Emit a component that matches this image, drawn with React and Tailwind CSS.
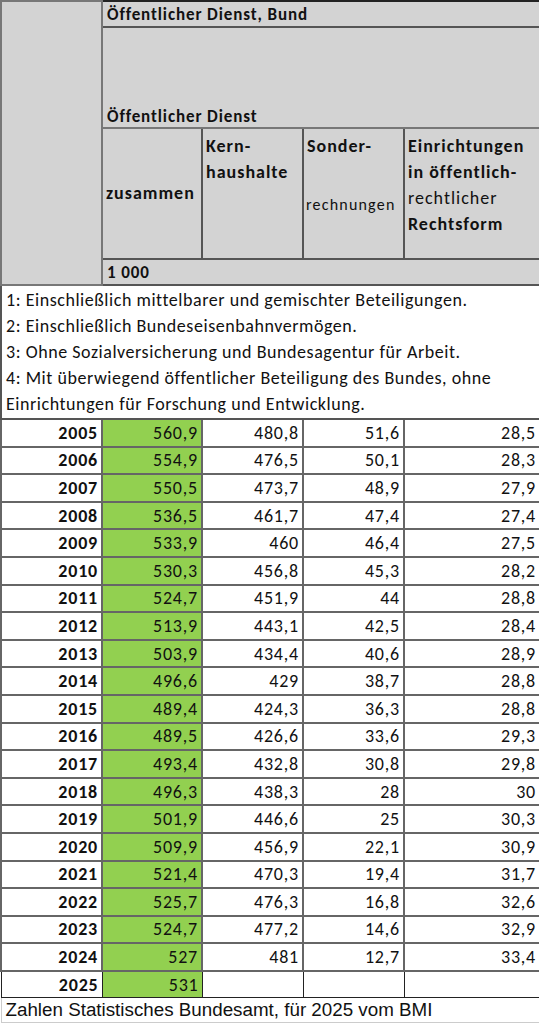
const rows = [
  ['2005', '560,9', '480,8', '51,6', '28,5'],
  ['2006', '554,9', '476,5', '50,1', '28,3'],
  ['2007', '550,5', '473,7', '48,9', '27,9'],
  ['2008', '536,5', '461,7', '47,4', '27,4'],
  ['2009', '533,9', '460', '46,4', '27,5'],
  ['2010', '530,3', '456,8', '45,3', '28,2'],
  ['2011', '524,7', '451,9', '44', '28,8'],
  ['2012', '513,9', '443,1', '42,5', '28,4'],
  ['2013', '503,9', '434,4', '40,6', '28,9'],
  ['2014', '496,6', '429', '38,7', '28,8'],
  ['2015', '489,4', '424,3', '36,3', '28,8'],
  ['2016', '489,5', '426,6', '33,6', '29,3'],
  ['2017', '493,4', '432,8', '30,8', '29,8'],
  ['2018', '496,3', '438,3', '28', '30'],
  ['2019', '501,9', '446,6', '25', '30,3'],
  ['2020', '509,9', '456,9', '22,1', '30,9'],
  ['2021', '521,4', '470,3', '19,4', '31,7'],
  ['2022', '525,7', '476,3', '16,8', '32,6'],
  ['2023', '524,7', '477,2', '14,6', '32,9'],
  ['2024', '527', '481', '12,7', '33,4'],
];

const notes = [
  '1: Einschließlich mittelbarer und gemischter Beteiligungen.',
  '2: Einschließlich Bundeseisenbahnvermögen.',
  '3: Ohne Sozialversicherung und Bundesagentur für Arbeit.',
  '4: Mit überwiegend öffentlicher Beteiligung des Bundes, ohne Einrichtungen für Forschung und Entwicklung.',
];

export default function App() {
  const cell = 'border-2 border-[#666] px-[3px] text-right align-middle';
  return (
    <div className="w-[539px] h-[1024px] bg-white overflow-hidden text-[#111]" style={{ fontFamily: '"Carlito", "Lato", "Open Sans", sans-serif' }}>
      <table className="w-[539px] table-fixed border-collapse">
        <colgroup>
          <col className="w-[101px]" />
          <col className="w-[100px]" />
          <col className="w-[101px]" />
          <col className="w-[101px]" />
          <col className="w-[136px]" />
        </colgroup>
        <tbody>
          {/* header block */}
          <tr className="h-[26px]">
            <td rowSpan={4} className="bg-[#d3d3d3] border-2 border-[#777]" />
            <td colSpan={4} className="bg-[#d3d3d3] border-2 border-[#555] border-t-[#222] px-[4px] text-[17px] tracking-[0.9px] font-bold leading-none">
              Öffentlicher Dienst, Bund
            </td>
          </tr>
          <tr className="h-[101px]">
            <td colSpan={4} className="bg-[#d3d3d3] border-2 border-[#777] px-[4px] pb-[2px] align-bottom text-[17px] tracking-[0.9px] font-bold leading-none">
              Öffentlicher Dienst
            </td>
          </tr>
          <tr className="h-[131px]">
            <td className="bg-[#d3d3d3] border-2 border-[#555] px-[3px] text-[18px] tracking-[1px] font-semibold align-middle">zusammen</td>
            <td className="bg-[#d3d3d3] border-2 border-[#555] px-[3px] pt-[4px] text-[18px] tracking-[1px] font-semibold align-top leading-[26px]">
              Kern-<br />haushalte
            </td>
            <td className="bg-[#d3d3d3] border-2 border-[#555] px-[2px] pt-[4px] align-top">
              <div className="flex flex-col h-[120px]">
                <span className="text-[18px] tracking-[1px] font-semibold leading-[26px] pl-[1px]">Sonder-</span>
                <span className="mt-[38px] text-[16px] tracking-[1.2px] leading-none">rechnungen</span>
              </div>
            </td>
            <td className="bg-[#d3d3d3] border-2 border-[#555] px-[3px] pt-[4px] align-top text-[18px] tracking-[1px] font-semibold leading-[26px]">
              Einrichtungen<br />in öffentlich-<br /><span className="font-medium">rechtlicher</span><br />Rechtsform
            </td>
          </tr>
          <tr className="h-[26px]">
            <td colSpan={4} className="bg-[#d3d3d3] border-2 border-[#555] px-[4px] text-[17px] tracking-[0.9px] font-bold leading-none">1 000</td>
          </tr>
          {/* notes */}
          <tr>
            <td colSpan={5} className="border-2 border-[#555] px-[4px] py-[1px] text-[18px] tracking-[0.55px] leading-[26px]">
              {notes.map((n) => (
                <div key={n}>{n}</div>
              ))}
            </td>
          </tr>
          {/* data */}
          {rows.map(([y, a, b, c, d]) => (
            <tr key={y} className="h-[27.6px] text-[18px] tracking-[0.8px] leading-none">
              <td className={`${cell} font-extrabold`}>{y}</td>
              <td className={`${cell} bg-[#92d050]`}>{a}</td>
              <td className={cell}>{b}</td>
              <td className={cell}>{c}</td>
              <td className={cell}>{d}</td>
            </tr>
          ))}
          <tr className="h-[27px] text-[18px] tracking-[0.8px] leading-none">
            <td className="border border-[#222] px-[3px] text-right font-extrabold">2025</td>
            <td className="border border-[#222] px-[3px] text-right bg-[#92d050]">531</td>
            <td className="border border-[#222]" />
            <td className="border border-[#222]" />
            <td className="border border-[#222]" />
          </tr>
          <tr className="h-[25px]">
            <td colSpan={5} className="border border-[#ccc] px-[4px] text-[18.8px] leading-none" style={{ fontFamily: '"Liberation Sans", Arial, sans-serif' }}>
              Zahlen Statistisches Bundesamt, für 2025 vom BMI
            </td>
          </tr>
        </tbody>
      </table>
    </div>
  );
}
